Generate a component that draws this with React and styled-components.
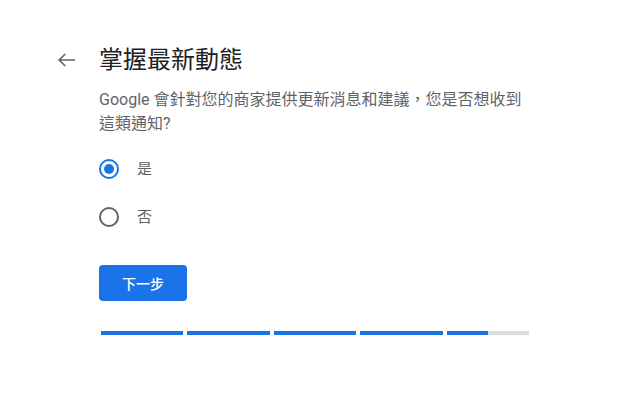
import React, { useState } from "react";
import styled, { createGlobalStyle } from "styled-components";

const Global = createGlobalStyle`
  html, body { margin: 0; padding: 0; background: #fff; }
  body { font-family: Roboto, "Noto Sans CJK TC", "Noto Sans", sans-serif; }
`;

const Page = styled.div`
  display: grid;
  grid-template-columns: 44px 432px;
  padding: 44px 0 0 55px;
`;

const BackButton = styled.button`
  width: 24px;
  height: 32px;
  padding: 0;
  border: none;
  background: none;
  display: flex;
  align-items: center;
  justify-content: center;
  color: #5f6368;
  cursor: pointer;
`;

const Content = styled.div`
  display: flex;
  flex-direction: column;
`;

const Title = styled.h1`
  margin: 0;
  font-size: 24px;
  line-height: 32px;
  font-weight: 400;
  color: #202124;
`;

const Subtitle = styled.p`
  margin: 12px 0 0;
  font-size: 16px;
  line-height: 24px;
  color: #5f6368;
  width: 432px;
`;

const Options = styled.div`
  display: flex;
  flex-direction: column;
  margin-top: 9px;
`;

const OptionRow = styled.label`
  display: flex;
  align-items: center;
  height: 48px;
  gap: 18px;
  cursor: pointer;
`;

const RadioCircle = styled.span`
  box-sizing: border-box;
  width: 20px;
  height: 20px;
  border-radius: 50%;
  border: 2px solid ${(p) => (p.$checked ? "#1a73e8" : "#5f6368")};
  display: flex;
  align-items: center;
  justify-content: center;
  &::after {
    content: "";
    width: 10px;
    height: 10px;
    border-radius: 50%;
    background: #1a73e8;
    display: ${(p) => (p.$checked ? "block" : "none")};
  }
`;

const OptionLabel = styled.span`
  font-size: 15px;
  line-height: 20px;
  color: #5f6368;
`;

const NextButton = styled.button`
  margin-top: 24px;
  width: 88px;
  height: 36px;
  border: none;
  border-radius: 4px;
  background: #1a73e8;
  color: #fff;
  font-family: Roboto, "Noto Sans CJK TC", sans-serif;
  font-size: 14px;
  font-weight: 500;
  cursor: pointer;
`;

const Progress = styled.div`
  display: flex;
  margin-top: 30px;
  width: 432px;
`;

const Segment = styled.div`
  flex: 1;
  height: 4px;
  margin: 0 2px;
  background: #dadce0;
  position: relative;
  overflow: hidden;
`;

const SegmentFill = styled.div`
  height: 100%;
  background: #1a73e8;
`;

const fills = [100, 100, 100, 100, 50];

export default function App() {
  const [value, setValue] = useState("yes");
  return (
    <>
      <Global />
      <Page>
        <div>
          <BackButton aria-label="返回">
            <svg width="24" height="24" viewBox="0 0 24 24" fill="none">
              <path
                d="M20 12H4.6M10.2 6 4.2 12l6 6"
                stroke="currentColor"
                strokeWidth="1.7"
              />
            </svg>
          </BackButton>
        </div>
        <Content>
          <Title>掌握最新動態</Title>
          <Subtitle>
            Google 會針對您的商家提供更新消息和建議，您是否想收到這類通知?
          </Subtitle>
          <Options>
            <OptionRow onClick={() => setValue("yes")}>
              <RadioCircle $checked={value === "yes"} />
              <OptionLabel>是</OptionLabel>
            </OptionRow>
            <OptionRow onClick={() => setValue("no")}>
              <RadioCircle $checked={value === "no"} />
              <OptionLabel>否</OptionLabel>
            </OptionRow>
          </Options>
          <div>
            <NextButton>下一步</NextButton>
          </div>
          <Progress>
            {fills.map((f, i) => (
              <Segment key={i}>
                <SegmentFill style={{ width: `${f}%` }} />
              </Segment>
            ))}
          </Progress>
        </Content>
      </Page>
    </>
  );
}
